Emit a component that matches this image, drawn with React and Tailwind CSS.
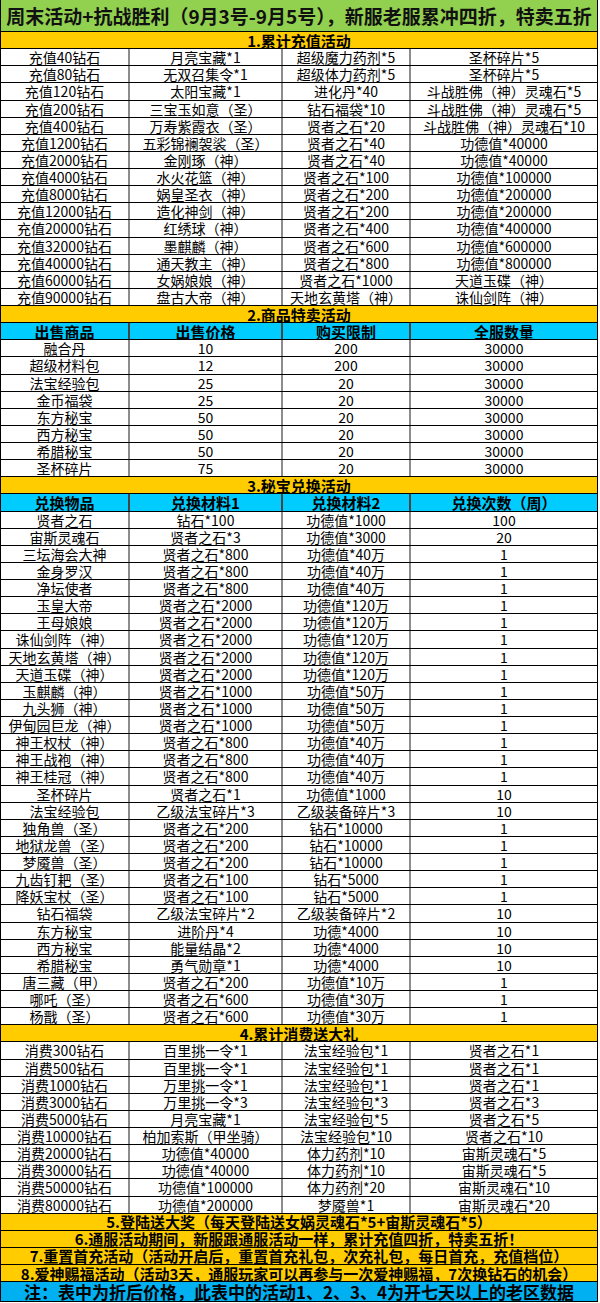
const font = { fontFamily: '"Noto Sans CJK SC", "Noto Sans", sans-serif' };

const chongzhi = [
    ["充值40钻石", "月亮宝藏*1", "超级魔力药剂*5", "圣杯碎片*5"],
    ["充值80钻石", "无双召集令*1", "超级体力药剂*5", "圣杯碎片*5"],
    ["充值120钻石", "太阳宝藏*1", "进化丹*40", "斗战胜佛（神）灵魂石*5"],
    ["充值200钻石", "三宝玉如意（圣）", "钻石福袋*10", "斗战胜佛（神）灵魂石*5"],
    ["充值400钻石", "万寿紫霞衣（圣）", "贤者之石*20", "斗战胜佛（神）灵魂石*10"],
    ["充值1200钻石", "五彩锦襕袈裟（圣）", "贤者之石*40", "功德值*40000"],
    ["充值2000钻石", "金刚琢（神）", "贤者之石*40", "功德值*40000"],
    ["充值4000钻石", "水火花篮（神）", "贤者之石*100", "功德值*100000"],
    ["充值8000钻石", "娲皇圣衣（神）", "贤者之石*200", "功德值*200000"],
    ["充值12000钻石", "造化神剑（神）", "贤者之石*200", "功德值*200000"],
    ["充值20000钻石", "红绣球（神）", "贤者之石*400", "功德值*400000"],
    ["充值32000钻石", "墨麒麟（神）", "贤者之石*600", "功德值*600000"],
    ["充值40000钻石", "通天教主（神）", "贤者之石*800", "功德值*800000"],
    ["充值60000钻石", "女娲娘娘（神）", "贤者之石*1000", "天道玉碟（神）"],
    ["充值90000钻石", "盘古大帝（神）", "天地玄黄塔（神）", "诛仙剑阵（神）"],
];

const temai = [
    ["融合丹", "10", "200", "30000"],
    ["超级材料包", "12", "200", "30000"],
    ["法宝经验包", "25", "20", "30000"],
    ["金币福袋", "25", "20", "30000"],
    ["东方秘宝", "50", "20", "30000"],
    ["西方秘宝", "50", "20", "30000"],
    ["希腊秘宝", "50", "20", "30000"],
    ["圣杯碎片", "75", "20", "30000"],
];

const duihuan = [
    ["贤者之石", "钻石*100", "功德值*1000", "100"],
    ["宙斯灵魂石", "贤者之石*3", "功德值*3000", "20"],
    ["三坛海会大神", "贤者之石*800", "功德值*40万", "1"],
    ["金身罗汉", "贤者之石*800", "功德值*40万", "1"],
    ["净坛使者", "贤者之石*800", "功德值*40万", "1"],
    ["玉皇大帝", "贤者之石*2000", "功德值*120万", "1"],
    ["王母娘娘", "贤者之石*2000", "功德值*120万", "1"],
    ["诛仙剑阵（神）", "贤者之石*2000", "功德值*120万", "1"],
    ["天地玄黄塔（神）", "贤者之石*2000", "功德值*120万", "1"],
    ["天道玉碟（神）", "贤者之石*2000", "功德值*120万", "1"],
    ["玉麒麟（神）", "贤者之石*1000", "功德值*50万", "1"],
    ["九头狮（神）", "贤者之石*1000", "功德值*50万", "1"],
    ["伊甸园巨龙（神）", "贤者之石*1000", "功德值*50万", "1"],
    ["神王权杖（神）", "贤者之石*800", "功德值*40万", "1"],
    ["神王战袍（神）", "贤者之石*800", "功德值*40万", "1"],
    ["神王桂冠（神）", "贤者之石*800", "功德值*40万", "1"],
    ["圣杯碎片", "贤者之石*1", "功德值*1000", "10"],
    ["法宝经验包", "乙级法宝碎片*3", "乙级装备碎片*3", "10"],
    ["独角兽（圣）", "贤者之石*200", "钻石*10000", "1"],
    ["地狱龙兽（圣）", "贤者之石*200", "钻石*10000", "1"],
    ["梦魇兽（圣）", "贤者之石*200", "钻石*10000", "1"],
    ["九齿钉耙（圣）", "贤者之石*100", "钻石*5000", "1"],
    ["降妖宝杖（圣）", "贤者之石*100", "钻石*5000", "1"],
    ["钻石福袋", "乙级法宝碎片*2", "乙级装备碎片*2", "10"],
    ["东方秘宝", "进阶丹*4", "功德*4000", "10"],
    ["西方秘宝", "能量结晶*2", "功德*4000", "10"],
    ["希腊秘宝", "勇气勋章*1", "功德*4000", "10"],
    ["唐三藏（甲）", "贤者之石*200", "功德值*10万", "1"],
    ["哪吒（圣）", "贤者之石*600", "功德值*30万", "1"],
    ["杨戬（圣）", "贤者之石*600", "功德值*30万", "1"],
];

const xiaofei = [
    ["消费300钻石", "百里挑一令*1", "法宝经验包*1", "贤者之石*1"],
    ["消费500钻石", "百里挑一令*1", "法宝经验包*1", "贤者之石*1"],
    ["消费1000钻石", "万里挑一令*1", "法宝经验包*1", "贤者之石*1"],
    ["消费3000钻石", "万里挑一令*3", "法宝经验包*3", "贤者之石*3"],
    ["消费5000钻石", "月亮宝藏*1", "法宝经验包*5", "贤者之石*5"],
    ["消费10000钻石", "柏加索斯（甲坐骑）", "法宝经验包*10", "贤者之石*10"],
    ["消费20000钻石", "功德值*40000", "体力药剂*10", "宙斯灵魂石*5"],
    ["消费30000钻石", "功德值*40000", "体力药剂*10", "宙斯灵魂石*5"],
    ["消费50000钻石", "功德值*100000", "体力药剂*20", "宙斯灵魂石*10"],
    ["消费80000钻石", "功德值*200000", "梦魇兽*1", "宙斯灵魂石*20"],
];

const notes = [
    "5.登陆送大奖（每天登陆送女娲灵魂石*5+宙斯灵魂石*5）",
    "6.通服活动期间，新服跟通服活动一样，累计充值四折，特卖五折！",
    "7.重置首充活动（活动开启后，重置首充礼包，次充礼包，每日首充，充值档位）",
    "8.爱神赐福活动（活动3天，通服玩家可以再参与一次爱神赐福，7次换钻石的机会）",
];

const SectionTitle = ({ children }) => (
    <div className="h-[17.14px] bg-[#ffcc00] border-b border-black flex items-center justify-center text-[15px] font-bold leading-none text-black">
        {children}
    </div>
);

const HeadRow = ({ cells }) => (
    <div className="h-[17.14px] bg-[#00ccff] border-b border-black grid grid-cols-[127px_153px_128px_1fr] text-[15px] font-bold leading-none text-black">
        {cells.map((c, i) => (
            <div
                key={i}
                className={"flex items-center justify-center " + (i > 0 ? "border-l-2 border-[#444]" : "")}
            >
                {c}
            </div>
        ))}
    </div>
);

const DataRow = ({ cells }) => (
    <div className="h-[17.14px] bg-white border-b border-black grid grid-cols-[127px_153px_128px_1fr] text-[14px] leading-none text-black">
        {cells.map((c, i) => (
            <div
                key={i}
                className={"flex items-center justify-center whitespace-nowrap " + (i > 0 ? "border-l-2 border-[#8c8c8c]" : "")}
            >
                {c}
            </div>
        ))}
    </div>
);

const App = () => {
    return (
        <div className="bg-white w-[600px] h-[1303px] overflow-hidden" style={font}>
            <div className="w-[598px] border-x border-black flex flex-col">
                <div className="h-[32px] bg-[#92d050] border-b border-black flex items-center justify-center text-[19px] font-bold leading-none text-[#111] whitespace-nowrap">
                    周末活动+抗战胜利（9月3号-9月5号），新服老服累冲四折，特卖五折
                </div>

                {/* 1. 累计充值 */}
                <SectionTitle>1.累计充值活动</SectionTitle>
                {chongzhi.map((r, i) => (
                    <DataRow key={i} cells={r} />
                ))}

                {/* 2. 商品特卖 */}
                <SectionTitle>2.商品特卖活动</SectionTitle>
                <HeadRow cells={["出售商品", "出售价格", "购买限制", "全服数量"]} />
                {temai.map((r, i) => (
                    <DataRow key={i} cells={r} />
                ))}

                {/* 3. 秘宝兑换 */}
                <SectionTitle>3.秘宝兑换活动</SectionTitle>
                <HeadRow cells={["兑换物品", "兑换材料1", "兑换材料2", "兑换次数（周）"]} />
                {duihuan.map((r, i) => (
                    <DataRow key={i} cells={r} />
                ))}

                {/* 4. 累计消费 */}
                <SectionTitle>4.累计消费送大礼</SectionTitle>
                {xiaofei.map((r, i) => (
                    <DataRow key={i} cells={r} />
                ))}

                {notes.map((n, i) => (
                    <SectionTitle key={i}>{n}</SectionTitle>
                ))}
                <div className="h-[20px] bg-[#00b0f0] border-b border-black flex items-center justify-center text-[17px] font-bold leading-none text-black whitespace-nowrap">
                    注：表中为折后价格，此表中的活动1、2、3、4为开七天以上的老区数据
                </div>
            </div>
        </div>
    );
};

export default App;
